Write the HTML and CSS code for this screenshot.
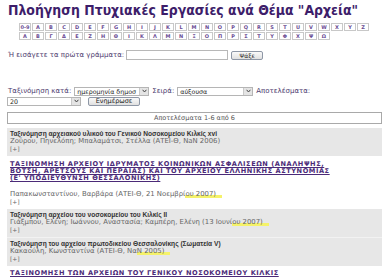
FILE: index.html
```html
<!DOCTYPE html>
<html lang="el">
<head>
<meta charset="utf-8">
<link rel="stylesheet" href="styles.css">
</head>
<body>
<h1 class="title">Πλοήγηση Πτυχιακές Εργασίες ανά Θέμα "Αρχεία"</h1>
<div class="alpha">
  <div class="arow">
    <a class="key">0-9</a><a class="key">A</a><a class="key">B</a><a class="key">C</a><a class="key">D</a><a class="key">E</a><a class="key">F</a><a class="key">G</a><a class="key">H</a><a class="key">I</a><a class="key">J</a><a class="key">K</a><a class="key">L</a><a class="key">M</a><a class="key">N</a><a class="key">O</a><a class="key">P</a><a class="key">Q</a><a class="key">R</a><a class="key">S</a><a class="key">T</a><a class="key">U</a><a class="key">V</a><a class="key">W</a><a class="key">X</a><a class="key">Y</a><a class="key">Z</a>
  </div>
  <div class="arow">
    <a class="key">Α</a><a class="key">Β</a><a class="key">Γ</a><a class="key">Δ</a><a class="key">Ε</a><a class="key">Ζ</a><a class="key">Η</a><a class="key">Θ</a><a class="key">Ι</a><a class="key">Κ</a><a class="key">Λ</a><a class="key">Μ</a><a class="key">Ν</a><a class="key">Ξ</a><a class="key">Ο</a><a class="key">Π</a><a class="key">Ρ</a><a class="key">Σ</a><a class="key">Τ</a><a class="key">Υ</a><a class="key">Φ</a><a class="key">Χ</a><a class="key">Ψ</a><a class="key">Ω</a>
  </div>
</div>
<div class="search">
  <span class="lbl">Ή εισάγετε τα πρώτα γράμματα:</span>
  <span class="input"></span>
  <span class="btn find">Ψάξε</span>
</div>
<div class="sort">
  <div class="sline">
    <span class="lbl">Ταξινόμηση κατά:</span>
    <span class="select s1"><span class="stext">ημερομηνία δημοσ</span><span class="arrow"><svg width="5" height="4" viewBox="0 0 5 4"><path d="M0.6 0.8 L2.5 3 L4.4 0.8" fill="none" stroke="#444" stroke-width="1"/></svg></span></span>
    <span class="lbl">Σειρά:</span>
    <span class="select s2"><span class="stext">αύξουσα</span><span class="arrow"><svg width="5" height="4" viewBox="0 0 5 4"><path d="M0.6 0.8 L2.5 3 L4.4 0.8" fill="none" stroke="#444" stroke-width="1"/></svg></span></span>
    <span class="lbl">Αποτελέσματα:</span>
  </div>
  <div class="sline">
    <span class="select s3"><span class="stext">20</span><span class="arrow"><svg width="5" height="4" viewBox="0 0 5 4"><path d="M0.6 0.8 L2.5 3 L4.4 0.8" fill="none" stroke="#444" stroke-width="1"/></svg></span></span>
    <span class="btn upd">Ενημέρωσε</span>
  </div>
</div>
<div class="count">Αποτελέσματα 1-6 από 6</div>
<div class="results">
  <div class="item gray">
    <div class="ititle">Ταξινόμηση αρχειακού υλικού του Γενικού Νοσοκομείου Κιλκίς xvi</div>
    <div class="auth">Ζούρου, Πηνελόπη; Μπαλαμάτσι, Στέλλα (ΑΤΕΙ-Θ, ΝaN 2006)</div>
    <div class="more">[+]</div>
  </div>
  <div class="item white first">
    <a class="ulink">ΤΑΞΙΝΟΜΗΣΗ ΑΡΧΕΙΟΥ ΙΔΡΥΜΑΤΟΣ ΚΟΙΝΩΝΙΚΩΝ ΑΣΦΑΛΙΣΕΩΝ (ΑΝΑΛΗΨΗΣ,<br>ΒΟΤΣΗ, ΑΡΕΤΣΟΥΣ ΚΑΙ ΠΕΡΑΙΑΣ) ΚΑΙ ΤΟΥ ΑΡΧΕΙΟΥ ΕΛΛΗΝΙΚΗΣ ΑΣΤΥΝΟΜΙΑΣ<br>(Ε' ΥΠΟΔΙΕΥΘΥΝΣΗ ΘΕΣΣΑΛΟΝΙΚΗΣ)</a>
    <div class="auth gapped">Παπακωνσταντίνου, Βαρβάρα (ΑΤΕΙ-Θ, 21 Νοεμβρί<span class="hl">ου 2007)</span></div>
    <div class="more">[+]</div>
  </div>
  <div class="item gray">
    <div class="ititle">Ταξινόμηση αρχείου του νοσοκομείου του Κιλκίς ΙΙ</div>
    <div class="auth">Γιάξμπου, Ελένη; Ιωάννου, Αναστασία; Καμπέρη, Ελένη (13 Ιουνί<span class="hl">ου 2007)</span></div>
    <div class="more">[+]</div>
  </div>
  <div class="item gray">
    <div class="ititle">Ταξινόμηση του αρχείου πρωτοδικείου Θεσσαλονίκης (Σωματεία V)</div>
    <div class="auth">Κακαούλη, Κωνσταντίνα (ΑΤΕΙ-Θ, Να<span class="hl">N 2005)</span></div>
    <div class="more">[+]</div>
  </div>
  <div class="item white">
    <a class="ulink">ΤΑΞΙΝΟΜΗΣΗ ΤΩΝ ΑΡΧΕΙΩΝ ΤΟΥ ΓΕΝΙΚΟΥ ΝΟΣΟΚΟΜΕΙΟΥ ΚΙΛΚΙΣ</a>
  </div>
</div>
</body>
</html>
```
FILE: styles.css
```css
html, body {
  margin: 0;
  background: #fff;
}
body {
  padding: 2px 8px 0 8px;
  font-family: "DejaVu Sans", Verdana, sans-serif;
  color: #555;
  font-size: 7px;
  overflow: hidden;
}
.title {
  margin: 0;
  font-family: "DejaVu Sans Condensed", "DejaVu Sans", sans-serif;
  font-stretch: condensed;
  font-size: 13.9px;
  line-height: 16px;
  font-weight: bold;
  color: #3d1d6a;
  white-space: nowrap;
}
.alpha {
  margin: 5px 0 0 11px;
  display: flex;
  flex-direction: column;
  gap: 1px;
}
.arow {
  display: flex;
  gap: 1px;
}
.key {
  width: 10px;
  height: 6px;
  border: 1px solid #c8c8c8;
  font-size: 5px;
  line-height: 6px;
  text-align: center;
  color: #6a4c93;
  font-weight: bold;
}
.search {
  margin-top: 10px;
  display: flex;
  align-items: center;
  height: 10px;
}
.lbl {
  color: #4d3a6e;
  font-size: 7px;
  white-space: nowrap;
}
.input {
  margin-left: 2px;
  width: 100px;
  height: 8px;
  border: 1px solid #b8b8b8;
  background: #fff;
}
.btn {
  height: 7px;
  padding: 0 3px;
  border: 1px solid #8e97a6;
  border-radius: 2px;
  background: linear-gradient(#fafafa, #e0e0e0);
  color: #222;
  font-size: 6px;
  line-height: 7px;
  text-align: center;
}
.find {
  margin-left: 3px;
  width: 24px;
}
.sort {
  margin-top: 26px;
}
.sline {
  display: flex;
  align-items: center;
  gap: 3px;
  height: 10px;
}
.select {
  display: flex;
  align-items: stretch;
  height: 7px;
  border: 1px solid #b5b5b5;
  background: #fff;
}
.stext {
  flex: 1;
  padding-left: 2px;
  color: #222;
  font-size: 6.3px;
  line-height: 7px;
  overflow: hidden;
  white-space: nowrap;
}
.arrow {
  width: 8px;
  display: flex;
  align-items: center;
  justify-content: center;
  border-left: 1px solid #c9c9c9;
  background: #e4e4e4;
}
.s1 { width: 73px; }
.s2 { width: 74px; }
.s3 { width: 72px; margin-left: -1px; }
.upd {
  margin-left: 4px;
  width: 44px;
  height: 7px;
  font-size: 6.5px;
}
.count {
  margin-top: 6px;
  margin-left: -1px;
  width: 373px;
  height: 10px;
  border: 1px solid #a9a9a9;
  text-align: center;
  line-height: 10px;
  color: #555;
  font-size: 6.5px;
}
.results {
  margin-top: 4px;
  margin-left: -1px;
  width: 375px;
}
.item {
  padding: 2px 3px 3px;
}
.gray {
  background: #e7e7e7;
}
.gray + .gray {
  border-top: 1px solid #f2f2f2;
}
.ititle {
  font-family: "Liberation Sans", Arial, sans-serif;
  font-weight: bold;
  color: #333;
  font-size: 6.6px;
  line-height: 8px;
}
.ulink {
  display: block;
  font-weight: bold;
  color: #4b2a78;
  text-decoration: underline;
  font-size: 6.6px;
  letter-spacing: 0.55px;
  line-height: 7px;
  white-space: nowrap;
}
.first {
  padding-top: 5px;
  padding-bottom: 3px;
}
.auth {
  font-size: 6.9px;
  line-height: 7px;
  color: #666;
  white-space: nowrap;
}
.gapped {
  margin-top: 9px;
}
.more {
  font-size: 6px;
  line-height: 8px;
  color: #666;
}
.item.white:last-child {
  padding-top: 4px;
}
.hl {
  padding-right: 6px;
  background: linear-gradient(transparent 68%, #f5f26a 68%, #f5f26a 100%);
}
```
